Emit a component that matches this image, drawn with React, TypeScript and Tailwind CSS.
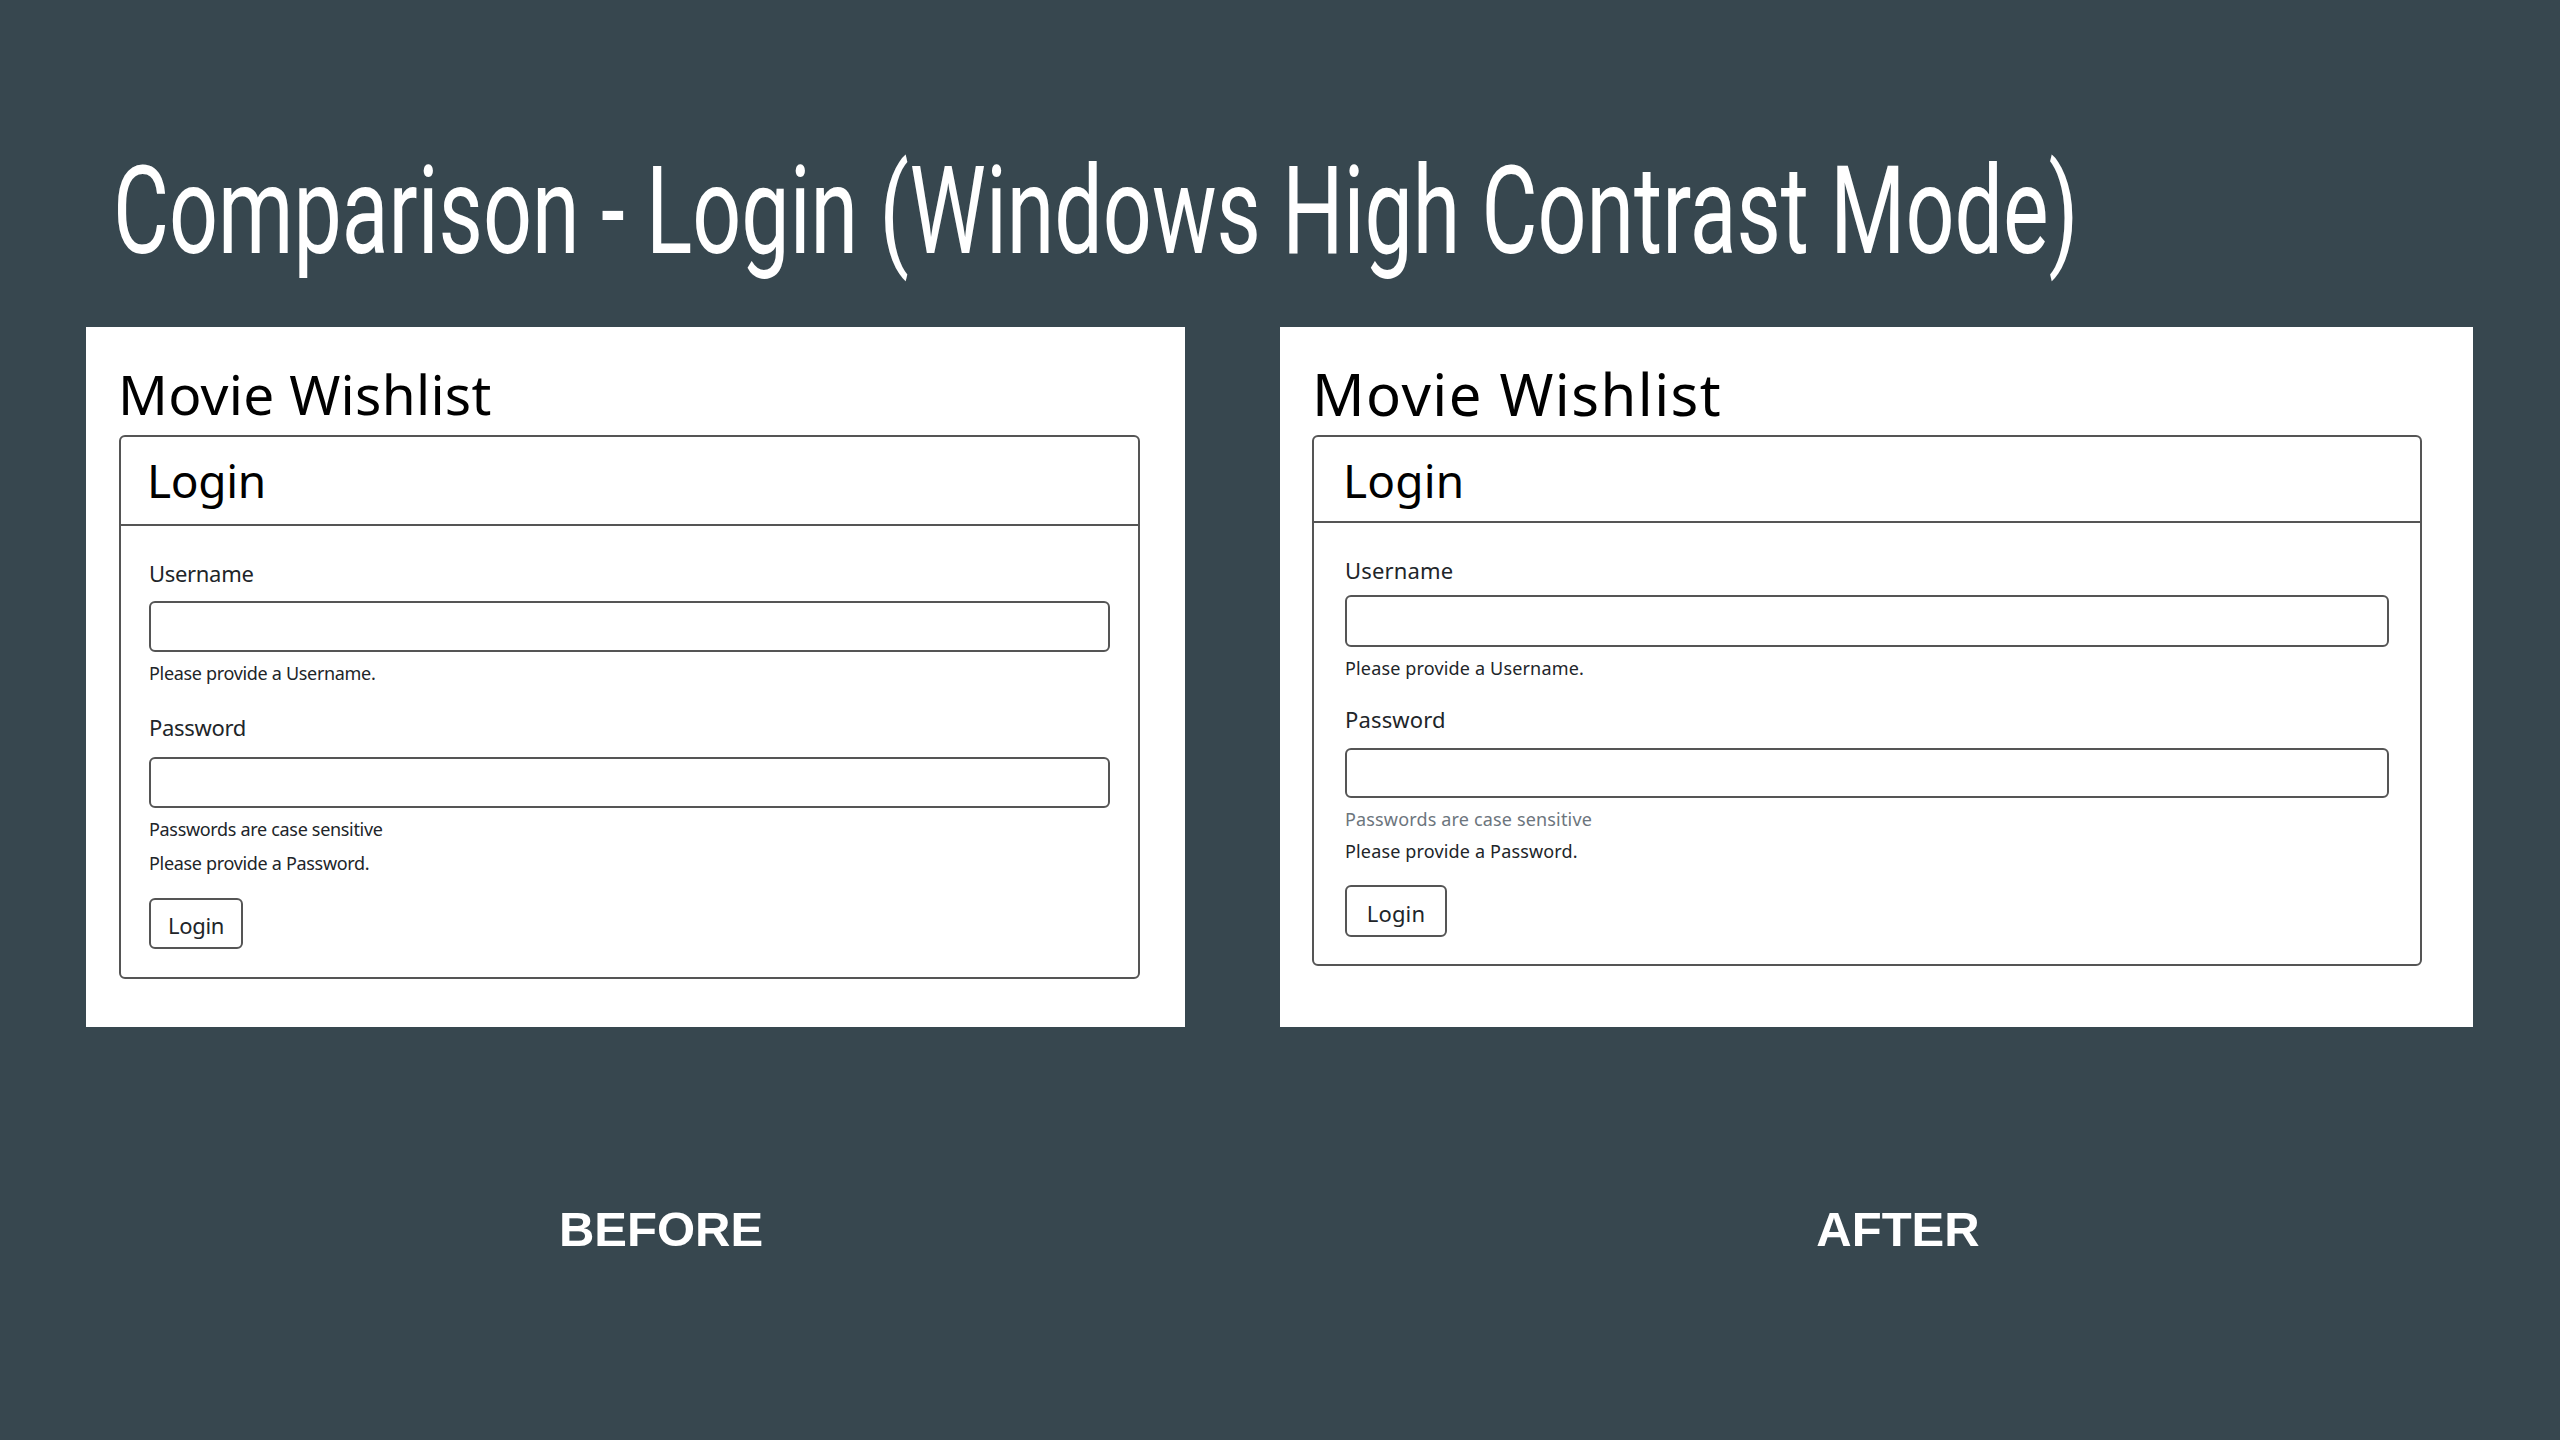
import React from 'react';

type Shot = {
  panel: string;
  heading: string;
  card: string;
  header: string;
  body: string;
  label1: string;
  input1: string;
  small1: string;
  label2: string;
  input2: string;
  small2: string;
  small3: string;
  button: string;
};

// left = original page, right = page in high contrast mode (screenshot is a bit wider)
const before: Shot = {
  panel: 'w-[1099px] h-[700px] bg-white pl-[33px] pt-[39px] tracking-[-0.02em]',
  heading: 'text-[55px] -ml-[1px] tracking-[0.005em]',
  card: 'mt-[14px] w-[1021px]',
  header: 'pt-[20px] pb-[21px] pl-[26px]',
  body: 'pt-[36px] pb-[28px] px-[28px]',
  label1: '',
  input1: 'mt-[17px] h-[51px]',
  small1: 'mt-[12px]',
  label2: 'mt-[34px]',
  input2: 'mt-[19px] h-[51px]',
  small2: 'mt-[12px] text-[#212529]',
  small3: 'mt-[16px]',
  button: 'mt-[26px] w-[94px] h-[51px]',
};

const after: Shot = {
  panel: 'w-[1193px] h-[700px] bg-white pl-[32px] pt-[38px] tracking-[0.01em]',
  heading: 'text-[58px] ml-0 tracking-[0.025em]',
  card: 'mt-[12px] w-[1110px]',
  header: 'pt-[20px] pb-[18px] pl-[29px]',
  body: 'pt-[36px] pb-[27px] px-[31px]',
  label1: '',
  input1: 'mt-[14px] h-[52px]',
  small1: 'mt-[12px]',
  label2: 'mt-[31px]',
  input2: 'mt-[18px] h-[50px]',
  small2: 'mt-[12px] text-[#6c757d]',
  small3: 'mt-[14px]',
  button: 'mt-[25px] w-[102px] h-[52px]',
};

const LoginShot: React.FC<{ s: Shot }> = ({ s }) => {
  return (
    <div className={`${s.panel} font-['Noto_Sans',sans-serif] text-[#212529]`}>
      <h1 className={`${s.heading} leading-none text-black`}>Movie Wishlist</h1>
      <div className={`${s.card} border-2 border-[#555] rounded-[6px]`}>
        <div className={`${s.header} border-b-2 border-[#555]`}>
          <h2 className="text-[46px] leading-none text-black">Login</h2>
        </div>
        <div className={s.body}>
          <div className={`${s.label1} text-[22px] leading-none`}>Username</div>
          <div className={`${s.input1} border-2 border-[#555] rounded-[6px]`} />
          <div className={`${s.small1} text-[18px] leading-none`}>Please provide a Username.</div>
          <div className={`${s.label2} text-[22px] leading-none`}>Password</div>
          <div className={`${s.input2} border-2 border-[#555] rounded-[6px]`} />
          <div className={`${s.small2} text-[18px] leading-none`}>Passwords are case sensitive</div>
          <div className={`${s.small3} text-[18px] leading-none`}>Please provide a Password.</div>
          <div
            className={`${s.button} border-2 border-[#555] rounded-[6px] flex items-center justify-center pt-[3px] text-[22px] leading-none`}
          >
            Login
          </div>
        </div>
      </div>
    </div>
  );
};

export default function App() {
  return (
    <div className="w-[2560px] h-[1440px] bg-[#37474f] overflow-hidden">
      {/* Title */}
      <div className="pt-[151px] pl-[113px] h-[273px]">
        <span className="inline-block origin-left scale-x-[0.705] whitespace-nowrap font-['Roboto',sans-serif] font-normal text-[122px] leading-none text-white">
          Comparison - Login (Windows High Contrast Mode)
        </span>
      </div>

      {/* Screenshots */}
      <div className="flex mt-[54px] pl-[86px] gap-[95px]">
        <LoginShot s={before} />
        <LoginShot s={after} />
      </div>

      {/* Captions */}
      <div className="flex mt-[178px] pl-[86px] font-['Liberation_Sans',Arial,sans-serif] font-bold text-[49px] leading-none text-white">
        <div className="w-[1150px] text-center">BEFORE</div>
        <div className="flex-1 text-center">AFTER</div>
      </div>
    </div>
  );
}
